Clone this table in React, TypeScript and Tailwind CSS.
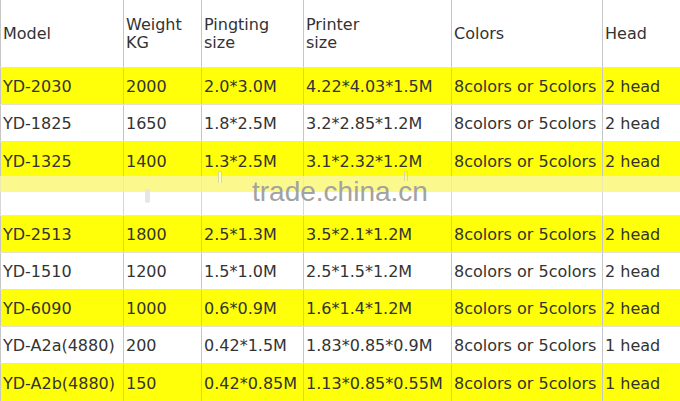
import React from 'react'

type Row = {
  model: string
  weight: string
  pingting: string
  printer: string
  colors: string
  head: string
  yellow: boolean
}

const ROWS_TOP: Row[] = [
  { model: 'YD-2030', weight: '2000', pingting: '2.0*3.0M', printer: '4.22*4.03*1.5M', colors: '8colors or 5colors', head: '2 head', yellow: true },
  { model: 'YD-1825', weight: '1650', pingting: '1.8*2.5M', printer: '3.2*2.85*1.2M', colors: '8colors or 5colors', head: '2 head', yellow: false },
]

const CUT_ROW: Row = { model: 'YD-1325', weight: '1400', pingting: '1.3*2.5M', printer: '3.1*2.32*1.2M', colors: '8colors or 5colors', head: '2 head', yellow: true }

const ROWS_BOTTOM: Row[] = [
  { model: 'YD-2513', weight: '1800', pingting: '2.5*1.3M', printer: '3.5*2.1*1.2M', colors: '8colors or 5colors', head: '2 head', yellow: true },
  { model: 'YD-1510', weight: '1200', pingting: '1.5*1.0M', printer: '2.5*1.5*1.2M', colors: '8colors or 5colors', head: '2 head', yellow: false },
  { model: 'YD-6090', weight: '1000', pingting: '0.6*0.9M', printer: '1.6*1.4*1.2M', colors: '8colors or 5colors', head: '2 head', yellow: true },
  { model: 'YD-A2a(4880)', weight: '200', pingting: '0.42*1.5M', printer: '1.83*0.85*0.9M', colors: '8colors or 5colors', head: '1 head', yellow: false },
  { model: 'YD-A2b(4880)', weight: '150', pingting: '0.42*0.85M', printer: '1.13*0.85*0.55M', colors: '8colors or 5colors', head: '1 head', yellow: true },
]

const GRID = 'grid grid-cols-[123px_78px_102px_148px_151px_78px]'
const CELL = 'border-l border-[#c6c6c6] pl-[2px] whitespace-nowrap overflow-visible'

function DataRow({ row, className }: { row: Row; className: string }) {
  const cells = [row.model, row.weight, row.pingting, row.printer, row.colors, row.head]
  return (
    <div className={`${GRID} ${row.yellow ? 'bg-[#ffff0a]' : 'bg-white'} ${className}`}>
      {cells.map((c, i) => (
        <div key={i} className={`${CELL} flex items-center pt-[1px]`}>
          {c}
        </div>
      ))}
    </div>
  )
}

export default function App() {
  return (
    <div className="relative w-[680px] h-[401px] overflow-hidden bg-white text-[16px] leading-[19px] text-[#333333] font-['DejaVu_Sans',Verdana,sans-serif]">
      {/* Header */}
      <div className={`${GRID} h-[68px] border-b border-[#e2e2e2]`}>
        <div className={`${CELL} flex items-center`}>Model</div>
        <div className={`${CELL} flex flex-col justify-center leading-[18px]`}>
          <span>Weight</span>
          <span>KG</span>
        </div>
        <div className={`${CELL} flex flex-col justify-center leading-[18px]`}>
          <span>Pingting</span>
          <span>size</span>
        </div>
        <div className={`${CELL} flex flex-col justify-center leading-[18px]`}>
          <span>Printer</span>
          <span>size</span>
        </div>
        <div className={`${CELL} flex items-center`}>Colors</div>
        <div className={`${CELL} flex items-center`}>Head</div>
      </div>

      {ROWS_TOP.map((r) => (
        <DataRow key={r.model} row={r} className="h-[37px] border-b border-[#e2e2d0]" />
      ))}

      {/* row cut by the torn strip */}
      <div className={`${GRID} bg-[#ffff0a] h-[34px]`}>
        {[CUT_ROW.model, CUT_ROW.weight, CUT_ROW.pingting, CUT_ROW.printer, CUT_ROW.colors, CUT_ROW.head].map((c, i) => (
          <div key={i} className={`${CELL} pt-[10px]`}>
            {c}
          </div>
        ))}
      </div>
      <div className={`${GRID} bg-[#fbf98e] h-[16px]`}>
        {[0, 1, 2, 3, 4, 5].map((i) => (
          <div key={i} className="border-l border-[#ecebb0]" />
        ))}
      </div>
      <div className={`${GRID} bg-white h-[24px] border-b border-[#e8e8d0]`}>
        {[0, 1, 2, 3, 4, 5].map((i) => (
          <div key={i} className="border-l border-[#d6d6d6]" />
        ))}
      </div>

      {ROWS_BOTTOM.map((r, i) => (
        <DataRow
          key={r.model}
          row={r}
          className={`h-[37px] ${i < ROWS_BOTTOM.length - 1 ? 'border-b border-[#e2e2d0]' : ''}`}
        />
      ))}

      {/* small torn-image marks */}
      <div className="absolute left-[218px] top-[171px] w-[4px] h-[12px] border border-[#d8d8a0] border-b-0 bg-[#fffcc0]" />
      <div className="absolute left-[145px] top-[189px] w-[5px] h-[14px] rounded-b-[3px] bg-[#e6e6e6]" />
      <div className="absolute left-[404px] top-[171px] w-[4px] h-[10px] border border-[#d8d8a0] border-b-0" />

      {/* watermark */}
      <div className="absolute left-[252px] top-[178px] text-[28px] leading-[28px] text-[#a2a2a2] font-['Liberation_Sans',Arial,sans-serif] pointer-events-none">
        trade.china.cn
      </div>
    </div>
  )
}
